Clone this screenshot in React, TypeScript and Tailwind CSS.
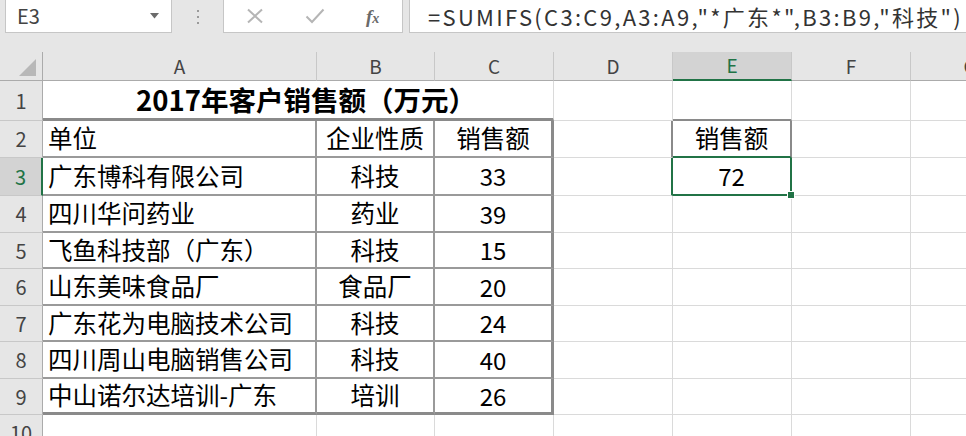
import React from 'react';

const rows: [string, string, string][] = [
  ['广东博科有限公司', '科技', '33'],
  ['四川华问药业', '药业', '39'],
  ['飞鱼科技部（广东）', '科技', '15'],
  ['山东美味食品厂', '食品厂', '20'],
  ['广东花为电脑技术公司', '科技', '24'],
  ['四川周山电脑销售公司', '科技', '40'],
  ['中山诺尔达培训-广东', '培训', '26'],
];

const cols = ['A', 'B', 'C', 'D', 'E', 'F', 'G'];

const grid = 'border-r border-b border-r-[#dadada] border-b-[#dadada]';

const RowHead: React.FC<{ n: number; active?: boolean }> = ({ n, active }) => (
  <div
    className={`flex items-center justify-center text-[20px] border-b border-b-[#c8c8c8] ${
      active
        ? 'bg-[#d3d3d3] text-[#217346] border-r-2 border-r-[#217346]'
        : 'bg-[#e6e6e6] text-[#444] border-r border-r-[#ababab]'
    }`}
  >
    {n}
  </div>
);

export default function App() {
  return (
    <div className="w-[966px] h-[436px] overflow-hidden bg-white font-['Noto_Sans_CJK_SC',sans-serif] text-black">
      {/* formula bar */}
      <div className="h-[52px] bg-[#e6e6e6] flex items-start">
        <div className="ml-[5px] w-[167px] h-[33px] bg-white border border-t-0 border-[#c6c6c6] flex items-center justify-between pl-[11px] pr-[12px]">
          <span className="text-[20px] text-[#444]">E3</span>
          <svg width="9" height="6" viewBox="0 0 9 6">
            <path d="M0 0h9L4.5 5.5z" fill="#6b6b6b" />
          </svg>
        </div>
        <div className="w-[51px] h-[33px] flex items-center justify-center">
          <div className="flex flex-col gap-[4px]">
            <span className="block w-[2px] h-[2px] bg-[#9a9a9a]" />
            <span className="block w-[2px] h-[2px] bg-[#9a9a9a]" />
            <span className="block w-[2px] h-[2px] bg-[#9a9a9a]" />
          </div>
        </div>
        <div className="w-[180px] h-[33px] bg-white border border-t-0 border-[#c6c6c6] flex items-center pl-[22px]">
          <svg width="18" height="16" viewBox="0 0 18 16" className="mr-[41px]">
            <path d="M2 1.5l14 13M16 1.5l-14 13" stroke="#b5b5b5" strokeWidth="2" />
          </svg>
          <svg width="20" height="16" viewBox="0 0 20 16" className="mr-[41px]">
            <path d="M1.5 8.5l5.5 5.5L18.5 1.5" stroke="#b5b5b5" strokeWidth="2" fill="none" />
          </svg>
          <span className="font-['Liberation_Serif',serif] italic font-bold text-[19px] text-[#6a6a6a] leading-none">
            f<span className="text-[14px]">x</span>
          </span>
        </div>
        <div className="ml-[6px] flex-1 h-[33px] bg-white border-l border-b border-[#c6c6c6] flex items-center pl-[18px]">
          <span className="text-[22px] tracking-[2.3px] text-[#333] whitespace-nowrap">
            =SUMIFS(C3:C9,A3:A9,"*广东*",B3:B9,"科技")
          </span>
        </div>
      </div>

      {/* sheet */}
      <div className="grid grid-cols-[43px_274px_118px_119px_119px_119px_119px_119px] grid-rows-[29px_40px_37px_38px_37px_36px_37px_36px_37px_36px_36px]">
        {/* column headers */}
        <div className="bg-[#e6e6e6] border-r border-b border-r-[#ababab] border-b-[#ababab] flex items-end justify-end pr-[6px] pb-[4px]">
          <svg width="17" height="17" viewBox="0 0 17 17">
            <path d="M17 0v17H0z" fill="#b8b8b8" />
          </svg>
        </div>
        {cols.map((c) => (
          <div
            key={c}
            className={`flex items-center justify-center text-[19px] border-r border-r-[#c8c8c8] ${
              c === 'E'
                ? 'bg-[#d3d3d3] text-[#217346] border-b-2 border-b-[#217346]'
                : 'bg-[#e6e6e6] text-[#444] border-b border-b-[#ababab]'
            }`}
          >
            {c}
          </div>
        ))}

        {/* row 1 */}
        <RowHead n={1} />
        <div className="col-span-3 flex items-center justify-center pl-[16px] text-[27.5px] font-bold border-r border-r-[#dadada] border-b-[3px] border-b-[#8a8a8a]">
          2017年客户销售额（万元）
        </div>
        <div className={grid} />
        <div className="border-r border-r-[#dadada] border-b-2 border-b-[#8a8a8a]" />
        <div className={grid} />
        <div className={grid} />

        {/* row 2 */}
        <RowHead n={2} />
        <div className="flex items-center pl-[5px] text-[24.5px] border-r-2 border-b-2 border-[#9a9a9a]">单位</div>
        <div className="flex items-center justify-center text-[24.5px] border-r-2 border-b-2 border-[#9a9a9a]">企业性质</div>
        <div className="flex items-center justify-center text-[24.5px] border-r-[3px] border-r-[#8a8a8a] border-b-2 border-b-[#9a9a9a]">销售额</div>
        <div className="border-r-2 border-r-[#8a8a8a] border-b border-b-[#dadada]" />
        <div className="flex items-center justify-center text-[24.5px] border-r-2 border-r-[#8a8a8a] border-b-2 border-b-[#217346]">销售额</div>
        <div className={grid} />
        <div className={grid} />

        {/* rows 3-9 */}
        {rows.map(([a, b, c], i) => {
          const last = i === rows.length - 1;
          const bottom = last ? 'border-b-[3px] border-b-[#8a8a8a]' : 'border-b-2 border-b-[#9a9a9a]';
          const n = i + 3;
          return (
            <React.Fragment key={n}>
              <RowHead n={n} active={n === 3} />
              <div className={`flex items-center pl-[5px] text-[24.5px] whitespace-nowrap border-r-2 border-r-[#9a9a9a] ${bottom}`}>{a}</div>
              <div className={`flex items-center justify-center text-[24.5px] border-r-2 border-r-[#9a9a9a] ${bottom}`}>{b}</div>
              <div className={`flex items-center justify-center text-[24px] border-r-[3px] border-r-[#8a8a8a] ${bottom}`}>{c}</div>
              {n === 3 ? (
                <>
                  <div className="border-r-2 border-r-[#217346] border-b border-b-[#dadada]" />
                  <div className="relative flex items-center justify-center text-[24px] border-r-2 border-b-2 border-[#217346]">
                    72
                    <span className="absolute -right-[5px] -bottom-[5px] w-[8px] h-[8px] bg-[#217346] border border-white" />
                  </div>
                </>
              ) : (
                <>
                  <div className={grid} />
                  <div className={grid} />
                </>
              )}
              <div className={grid} />
              <div className={grid} />
            </React.Fragment>
          );
        })}

        {/* row 10 */}
        <RowHead n={10} />
        <div className={grid} />
        <div className={grid} />
        <div className={grid} />
        <div className={grid} />
        <div className={grid} />
        <div className={grid} />
        <div className={grid} />
      </div>
    </div>
  );
}
